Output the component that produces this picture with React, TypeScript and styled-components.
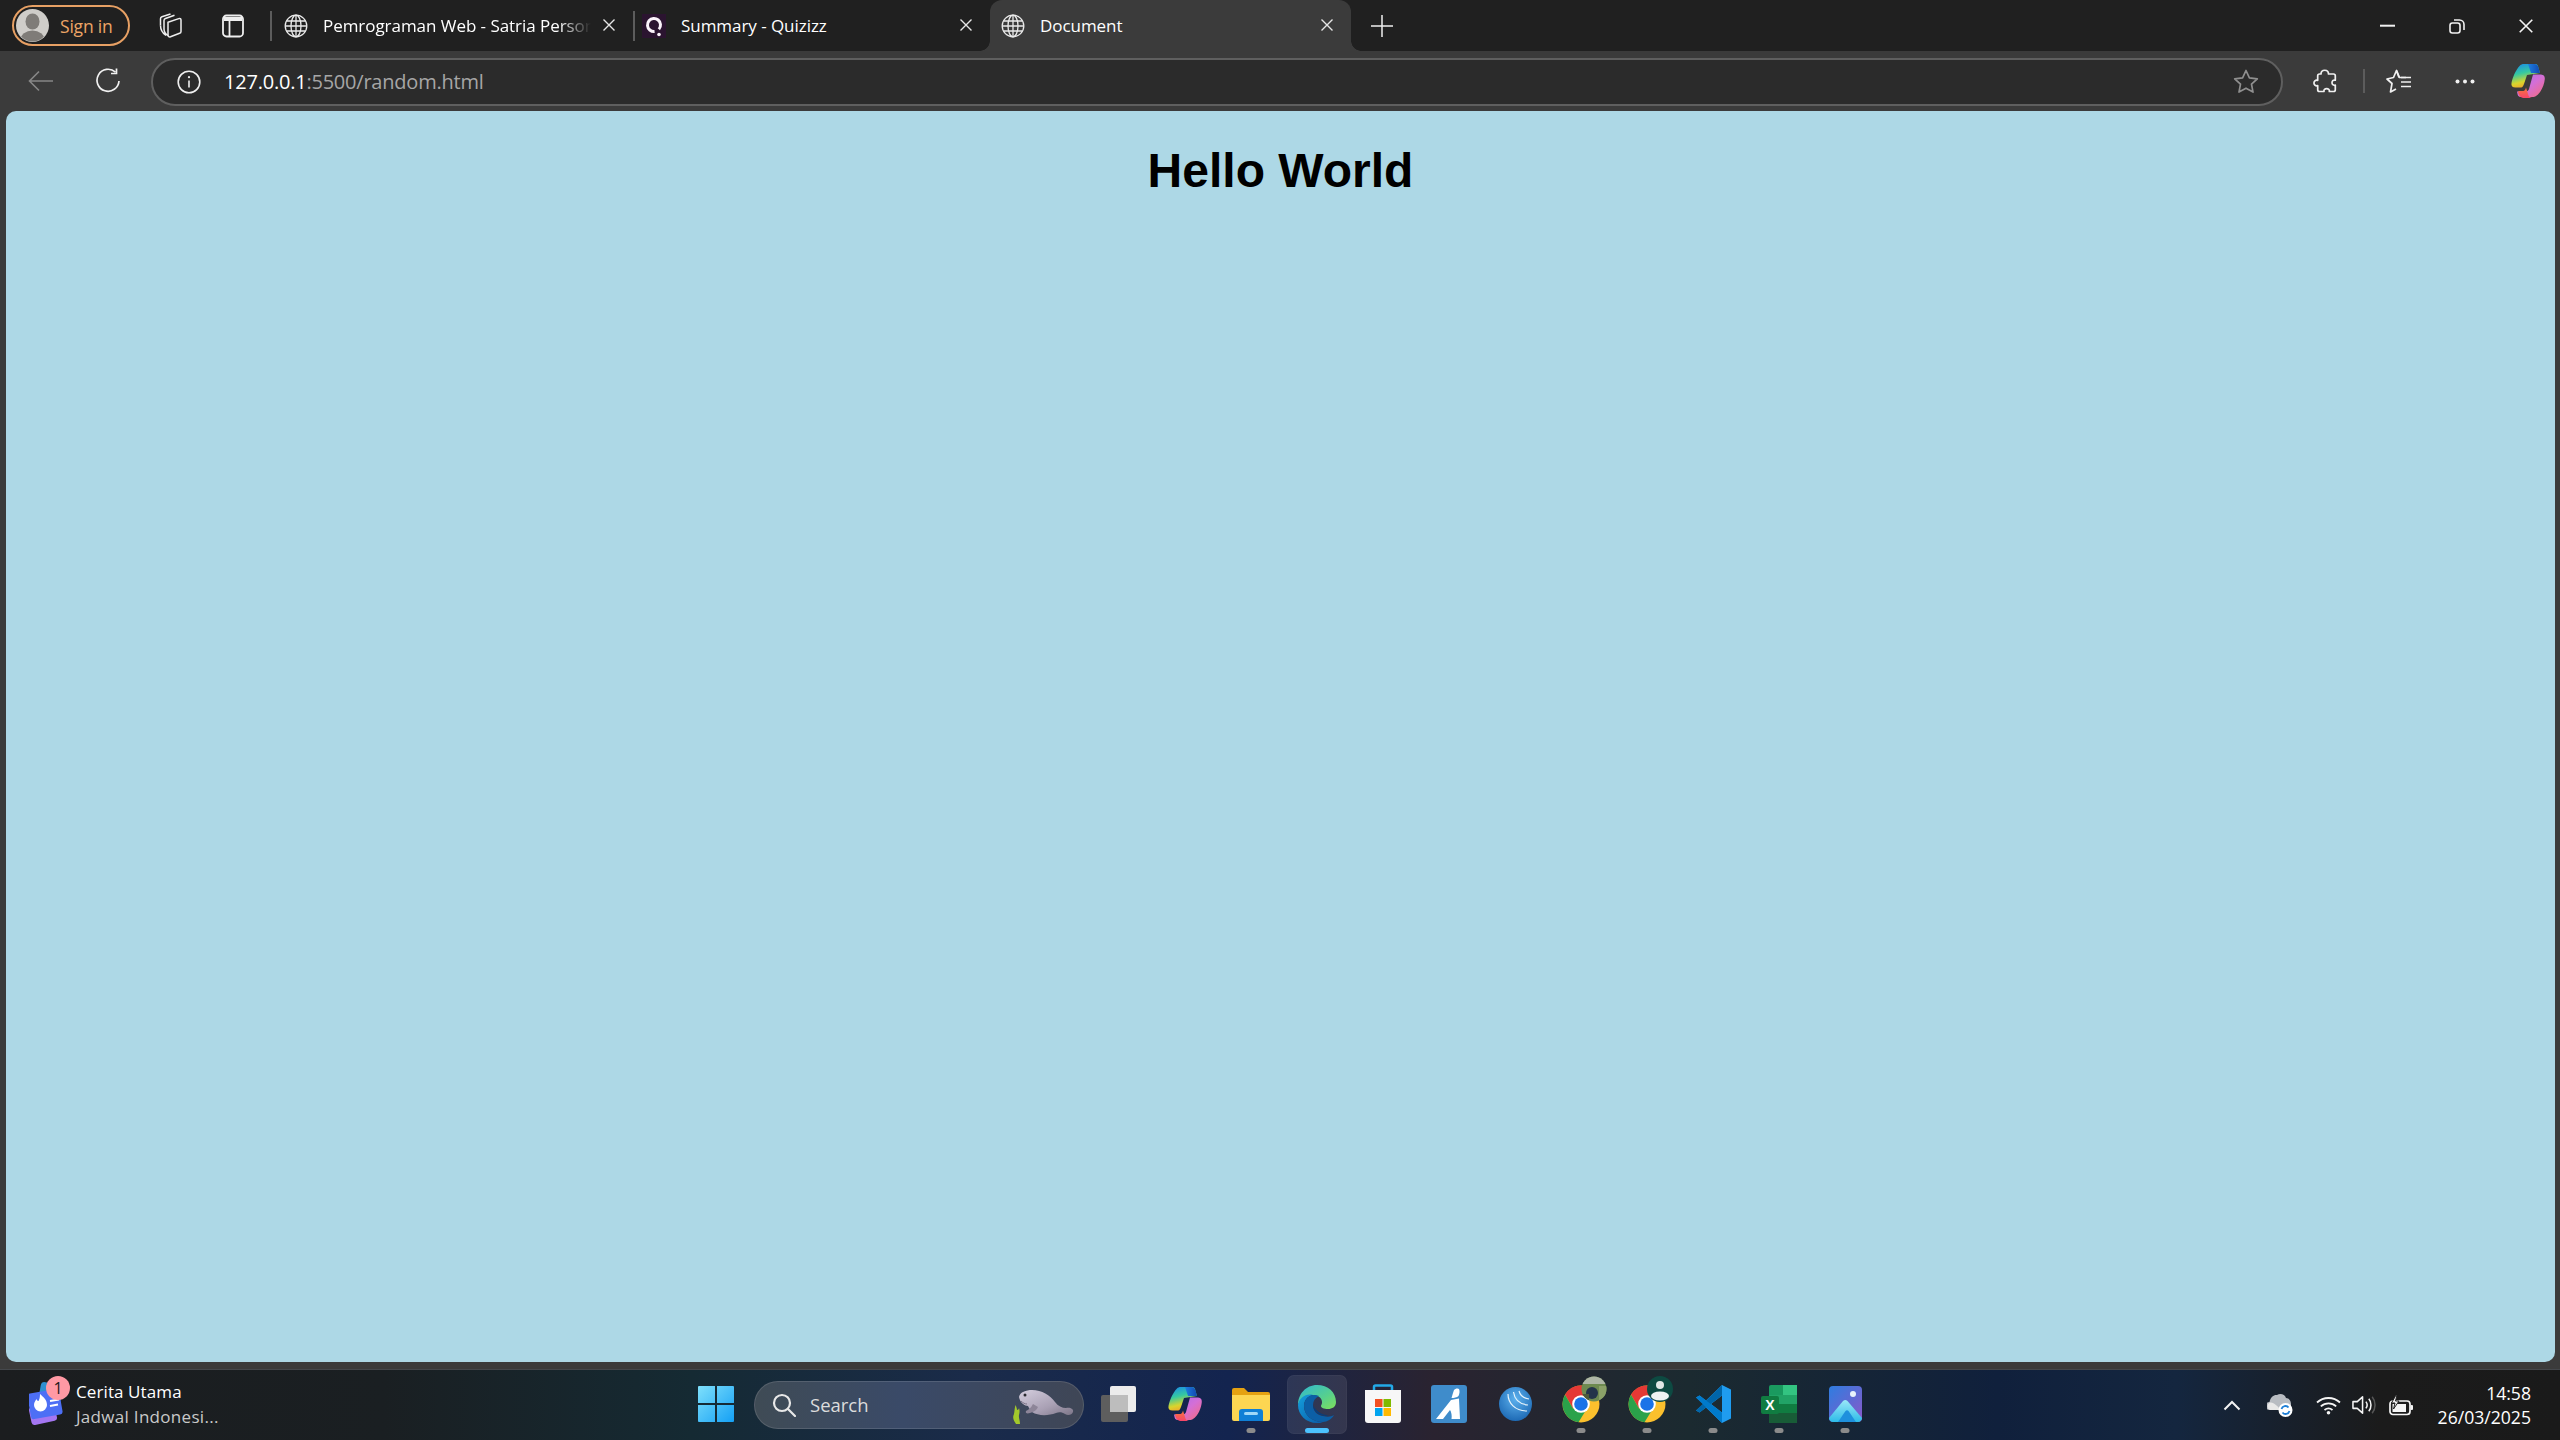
import React from "react";
import styled, { createGlobalStyle } from "styled-components";

const Global = createGlobalStyle`
  html, body { margin: 0; padding: 0; background: #3b3b3b; }
  #root { width: 2560px; height: 1440px; overflow: hidden; }
`;

const UI = `"Open Sans", "Noto Sans", sans-serif`;

const Page = styled.div`
  width: 2560px;
  height: 1440px;
  display: flex;
  flex-direction: column;
  font-family: ${UI};
`;

/* ---------- title bar ---------- */
const TitleBar = styled.div`
  height: 51px;
  flex: none;
  background: #202020;
  display: flex;
  align-items: center;
  padding-left: 12px;
`;
const SignIn = styled.div`
  width: 118px;
  height: 41px;
  box-sizing: border-box;
  border: 2px solid #e7a064;
  border-radius: 21px;
  display: flex;
  align-items: center;
  padding-left: 2px;
  gap: 11px;
  color: #eda566;
  font-size: 17.5px;
  letter-spacing: -0.2px;
`;
const Slot = styled.div<{ $w: number; $ml?: number }>`
  width: ${(p) => p.$w}px;
  margin-left: ${(p) => p.$ml ?? 0}px;
  flex: none;
  display: flex;
  align-items: center;
  justify-content: center;
`;
const TabDivider = styled.div`
  width: 2px;
  height: 30px;
  background: #5c5c5c;
  flex: none;
`;
const Tab = styled.div<{ $w: number; $active?: boolean }>`
  position: relative;
  width: ${(p) => p.$w}px;
  flex: none;
  align-self: stretch;
  display: flex;
  align-items: center;
  box-sizing: border-box;
  background: ${(p) => (p.$active ? "#3b3b3b" : "transparent")};
  border-radius: 12px 12px 0 0;
  color: #fff;
  font-size: 17px;
  letter-spacing: -0.05px;
`;
const TabIcon = styled.div<{ $x: number }>`
  width: 26px;
  flex: none;
  margin-left: ${(p) => p.$x}px;
  display: flex;
  justify-content: center;
`;
const TabTitle = styled.div<{ $w: number; $fade?: boolean }>`
  width: ${(p) => p.$w}px;
  margin-left: 14px;
  flex: none;
  white-space: nowrap;
  overflow: hidden;
  ${(p) =>
    p.$fade
      ? "-webkit-mask-image: linear-gradient(90deg,#000 88%,transparent 100%); mask-image: linear-gradient(90deg,#000 88%,transparent 100%);"
      : ""}
`;
const TabClose = styled.div`
  position: absolute;
  right: 17px;
  top: 18px;
  display: flex;
`;
const Flare = styled.div<{ $side: "left" | "right" }>`
  position: absolute;
  bottom: 0;
  ${(p) => p.$side}: -10px;
  width: 10px;
  height: 10px;
  background: radial-gradient(circle at ${(p) => (p.$side === "left" ? "0 0" : "100% 0")}, #202020 9.5px, #3b3b3b 10px);
`;
const Spacer = styled.div`
  flex: 1;
`;

/* ---------- toolbar ---------- */
const ToolBar = styled.div`
  height: 60px;
  flex: none;
  background: #3b3b3b;
  display: flex;
  align-items: center;
  padding: 0 0 0 9px;
`;
const Address = styled.div`
  width: 2132px;
  height: 48px;
  margin-top: 1px;
  margin-left: 9px;
  flex: none;
  box-sizing: border-box;
  background: #2b2b2b;
  border: 2px solid #5f5f5f;
  border-radius: 24px;
  display: flex;
  align-items: center;
  padding: 0 22px 0 24px;
  font-size: 20px;
  letter-spacing: -0.22px;
`;
const UrlHost = styled.span`
  color: #fff;
  margin-left: 23px;
`;
const UrlRest = styled.span`
  color: #a6a6a6;
`;
const ToolDivider = styled.div`
  width: 2px;
  height: 24px;
  background: #5c5c5c;
  flex: none;
`;

/* ---------- page viewport ---------- */
const Frame = styled.div`
  flex: 1;
  background: #3b3b3b;
  padding: 0 5px 7px 6px;
  display: flex;
`;
const Viewport = styled.main`
  flex: 1;
  background: #add8e6;
  border-radius: 10px;
  text-align: center;
  font-family: "Liberation Sans", Arial, sans-serif;
`;
const Heading = styled.h1`
  margin: 33px 0 0;
  font-size: 48px;
  line-height: 54px;
  font-weight: 700;
  color: #000;
`;

/* ---------- taskbar ---------- */
const TaskBar = styled.footer`
  height: 71px;
  flex: none;
  background: linear-gradient(
    90deg,
    #1b1d1f 0%,
    #1a1f22 15%,
    #152a33 27%,
    #1a2b4a 38%,
    #13244f 48%,
    #2a2330 56%,
    #1b2a30 66%,
    #10203c 78%,
    #14263f 85%,
    #1b1b1b 93%,
    #1a1a1a 100%
  );
  border-top: 1px solid #45484c;
  box-sizing: border-box;
  display: flex;
  align-items: center;
  position: relative;
`;
const Widget = styled.div`
  width: 683px;
  flex: none;
  display: flex;
  align-items: center;
  box-sizing: border-box;
  padding-left: 29px;
  gap: 9px;
`;
const WidgetIcon = styled.div`
  position: relative;
  width: 38px;
  height: 44px;
  flex: none;
  margin-top: -4px;
`;
const Badge = styled.div`
  position: absolute;
  left: 17px;
  top: -5px;
  width: 24px;
  height: 24px;
  border-radius: 50%;
  background: #ff99a4;
  color: #1a1a1a;
  font-size: 16px;
  line-height: 24px;
  text-align: center;
`;
const WidgetText = styled.div`
  display: flex;
  flex-direction: column;
  gap: 4px;
  margin-top: -2px;
  font-size: 17px;
  line-height: 21px;
  letter-spacing: 0.1px;
`;
const WidgetTitle = styled.div`
  color: #fff;
`;
const WidgetSub = styled.div`
  color: #c9c9c9;
  letter-spacing: 0.3px;
`;
const SearchBox = styled.div`
  position: relative;
  width: 330px;
  height: 48px;
  margin: -1px 2px 0 5px;
  box-sizing: border-box;
  flex: none;
  border: 1.5px solid rgba(255, 255, 255, 0.12);
  border-radius: 24px;
  background: linear-gradient(90deg, #3f4b55 0%, #3a4a68 45%, #3f4656 100%);
  display: flex;
  align-items: center;
  padding-left: 17px;
  color: #dcdcdc;
  font-size: 18.5px;
  gap: 14px;
`;
const Manatee = styled.div`
  position: absolute;
  right: 9px;
  top: 7px;
  display: flex;
`;
const TaskSlot = styled.div`
  position: relative;
  width: 66px;
  height: 59px;
  flex: none;
  display: flex;
  align-items: center;
  justify-content: center;
  margin-top: -2px;
  box-sizing: border-box;
`;
const ActiveBack = styled.div`
  position: absolute;
  left: 3px;
  right: 3px;
  top: 0;
  bottom: 0;
  border-radius: 7px;
  background: rgba(255, 255, 255, 0.09);
  border: 1px solid rgba(255, 255, 255, 0.03);
`;
const RunDot = styled.div<{ $active?: boolean }>`
  position: absolute;
  left: 50%;
  bottom: 1px;
  transform: translateX(-50%);
  width: ${(p) => (p.$active ? 24 : 9)}px;
  height: 5px;
  border-radius: 3px;
  background: ${(p) => (p.$active ? "#4cc2ff" : "#8b8b8b")};
`;
const IconWrap = styled.div`
  position: relative;
  display: flex;
`;
const Tray = styled.div`
  margin-left: auto;
  display: flex;
  align-items: center;
`;
const Clock = styled.div`
  width: 98px;
  margin-left: 7px;
  margin-right: 29px;
  text-align: right;
  color: #fff;
  font-size: 17.6px;
  line-height: 24px;
  flex: none;
  white-space: nowrap;
`;

/* ---------- icons ---------- */
const Avatar = () => (
  <svg width="33" height="33" viewBox="0 0 33 33">
    <circle cx="16.5" cy="16.5" r="16.5" fill="#cfcdc9" />
    <clipPath id="av">
      <circle cx="16.5" cy="16.5" r="16" />
    </clipPath>
    <g clipPath="url(#av)" fill="#7f7c78">
      <ellipse cx="16.5" cy="12.5" rx="7" ry="8" />
      <ellipse cx="16.5" cy="31" rx="12" ry="9.5" />
    </g>
  </svg>
);
const Collections = () => (
  <svg width="25" height="25" viewBox="0 0 25 25" fill="none" stroke="#eee" strokeWidth="1.5" strokeLinejoin="round">
    <path d="M11 9.2L21.8 5.600c1.200-.4 2.200.2 2.200 1.500v11.300c0 1-.5 1.600-1.400 1.900L13.500 23.800c-1.400.5-2.500-.3-2.500-1.700z" />
    <path d="M7 16V7.500c0-1 .5-1.700 1.400-2L17.500 2.200" />
    <path d="M3.500 12.500V5.800c0-1 .5-1.700 1.400-2L13.500 1" />
    <path d="M7 16c0 2 1.500 5 4 6.500M3.500 12.500c0 3 2 7.500 5.500 10" />
  </svg>
);
const VerticalTabs = () => (
  <svg width="22" height="24" viewBox="0 0 22 24" fill="none" stroke="#eee" strokeWidth="1.8">
    <rect x="1" y="1.5" width="20" height="21" rx="3.5" />
    <path d="M7.5 7v15" />
    <path d="M2 3h18v4H2z" fill="#eee" stroke="none" />
  </svg>
);
const Globe = () => (
  <svg width="24" height="24" viewBox="0 0 24 24" fill="none" stroke="#eaeaea" strokeWidth="1.3">
    <circle cx="12" cy="12" r="10.8" />
    <ellipse cx="12" cy="12" rx="5" ry="10.8" />
    <path d="M1.2 12h21.6M2.6 7h18.8M2.600 17h18.8M12 1.2v21.6" />
  </svg>
);
const Quizizz = () => (
  <svg width="24" height="24" viewBox="0 0 24 24">
    <rect width="24" height="24" fill="#2b1430" />
    <circle cx="12" cy="11" r="6.500" fill="none" stroke="#fbf4fb" strokeWidth="3" strokeDasharray="35 6" transform="rotate(85 12 11)" />
    <circle cx="17" cy="20.500" r="1.800" fill="#fbf4fb" />
  </svg>
);
const Close = ({ s = 14, c = "#e6e6e6" }: { s?: number; c?: string }) => (
  <svg width={s} height={s} viewBox="0 0 14 14" stroke={c} strokeWidth="1.4" fill="none">
    <path d="M1.5 1.5l11 11M12.5 1.5l-11 11" />
  </svg>
);
const Plus = () => (
  <svg width="22" height="22" viewBox="0 0 22 22" stroke="#eee" strokeWidth="1.5">
    <path d="M11 0v22M0 11h22" />
  </svg>
);
const Minimize = () => (
  <svg width="16" height="4" viewBox="0 0 16 4">
    <rect y="0.7" width="15" height="2" fill="#f0f0f0" />
  </svg>
);
const Restore = () => (
  <svg width="16" height="16" viewBox="0 0 16 16" fill="none" stroke="#f0f0f0" strokeWidth="1.6">
    <rect x="1" y="5" width="10" height="10" rx="2.4" />
    <path d="M5 2h5.5A4.5 4.5 0 0 1 15 6.5V12" />
  </svg>
);
const Back = () => (
  <svg width="26" height="22" viewBox="0 0 26 22" fill="none" stroke="#878787" strokeWidth="1.6">
    <path d="M25 11H2M11 1.5L1.5 11l9.5 9.5" />
  </svg>
);
const Refresh = () => (
  <svg width="26" height="26" viewBox="0 0 26 26" fill="none" stroke="#f0f0f0" strokeWidth="1.7">
    <path d="M20.5 4.2A11 11 0 1 0 24 13" />
    <path d="M21.5 0.5v5h-5.5" />
  </svg>
);
const Info = () => (
  <svg width="24" height="24" viewBox="0 0 24 24" fill="none" stroke="#f0f0f0" strokeWidth="1.6">
    <circle cx="12" cy="12" r="10.8" />
    <path d="M12 10.5v7" />
    <circle cx="12" cy="7.2" r="1.1" fill="#f0f0f0" stroke="none" />
  </svg>
);
const Star = () => (
  <svg width="26" height="25" viewBox="0 0 26 25" fill="none" stroke="#8f8f8f" strokeWidth="1.7" strokeLinejoin="round">
    <path d="M13 1.500l3.400 7.300 7.900 1-5.800 5.400 1.500 7.900L13 19.200l-7 3.900 1.500-7.900-5.800-5.400 7.900-1z" />
  </svg>
);
const Extensions = () => (
  <svg width="24" height="25" viewBox="0 0 24 25" fill="none" stroke="#f0f0f0" strokeWidth="1.7" strokeLinejoin="round">
    <path d="M8 5c0-5 7.500-5 7.500 0h5c1 0 1.800.8 1.800 1.800v4.400c-4.400-1-4.400 6 0 5v4.500c0 1-.8 1.800-1.800 1.800h-4.200c1-3.800-6.300-3.800-5.300 0H6.500c-1 0-1.800-.8-1.800-1.800v-4c-5 1-5-6.400 0-5.400V6.800C4.700 5.800 5.500 5 6.500 5z" />
  </svg>
);
const Favorites = () => (
  <svg width="26" height="25" viewBox="0 0 26 25" fill="none" stroke="#f0f0f0" strokeWidth="1.7" strokeLinejoin="round">
    <path d="M13 8.500L10.500 1.500 7.500 8.500 1 10l5 4.500L4.500 23 10 20" />
    <path d="M10.500 1.500l3 7H20" />
    <path d="M15 13h10M15 17.500h10M15 8.500h10" strokeWidth="1.5" />
  </svg>
);
const Dots = () => (
  <svg width="20" height="5" viewBox="0 0 20 5" fill="#f0f0f0">
    <circle cx="2.500" cy="2.500" r="2" />
    <circle cx="10" cy="2.500" r="2" />
    <circle cx="17.500" cy="2.500" r="2" />
  </svg>
);
const Copilot = ({ size = 34, id }: { size?: number; id: string }) => (
  <svg width={size} height={size} viewBox="0 0 34 34">
    <defs>
      <linearGradient id={`${id}a`} x1="0.2" y1="0" x2="0.5" y2="1">
        <stop offset="0" stopColor="#1b8fe6" />
        <stop offset="0.4" stopColor="#36c9a0" />
        <stop offset="0.75" stopColor="#d8d52d" />
        <stop offset="1" stopColor="#f2a32a" />
      </linearGradient>
      <linearGradient id={`${id}b`} x1="0" y1="0" x2="1" y2="1">
        <stop offset="0" stopColor="#a86bf0" />
        <stop offset="0.5" stopColor="#d46fd6" />
        <stop offset="1" stopColor="#f76a7a" />
      </linearGradient>
      <linearGradient id={`${id}c`} x1="0" y1="0" x2="0" y2="1">
        <stop offset="0" stopColor="#f8783a" />
        <stop offset="1" stopColor="#f6456a" />
      </linearGradient>
      <linearGradient id={`${id}d`} x1="0" y1="0" x2="1" y2="0">
        <stop offset="0" stopColor="#1d7fe0" />
        <stop offset="1" stopColor="#1248b0" />
      </linearGradient>
    </defs>
    <path d="M9 1.500C10 .5 11 0 13 0h11c2.500 0 3 1.500 3.500 4L29 9l-13 2-3 9c-1 3-2 3.500-4 3.500H4.500C1.500 23.500 0 22 .5 19c1-5 4-13 8.500-17.500z" fill={`url(#${id}a)`} />
    <path d="M17 0h6c2.500 0 3.800 1 4.600 4l1.400 5h-9z" fill={`url(#${id}d)`} />
    <path d="M22 10.500h7c3 0 5 1 4.800 4.500-.4 6-4 14-8.800 17-1 .8-2 1-3.500 1H10c-2.500 0-3.200-1.500-3.600-3.500l-.4-2h8.500c2 0 3-1 3.500-2.500z" fill={`url(#${id}b)`} />
    <path d="M13.500 34h7.500c-2.500-.3-3.500-2-4-4l-2-6.500c-.5 2-1 3-2.500 3.500H8l-1 .5c.5 4 2.500 6.500 6.500 6.500z" fill={`url(#${id}c)`} />
  </svg>
);
const Fire = () => (
  <svg width="38" height="44" viewBox="0 0 38 44">
    <rect x="10" y="2" width="22" height="26" rx="4" fill="#2e8fd0" transform="rotate(10 20 15)" />
    <rect x="1" y="24" width="26" height="18" rx="3" fill="#a476f2" transform="rotate(-12 14 33)" />
    <rect x="0" y="10" width="32" height="26" rx="3" fill="#4d6ff5" transform="rotate(-10 16 23)" />
    <path d="M11 13c3 3 7 5 7 11a6.500 6.500 0 0 1-13 0c0-3 1.500-4 2.500-6 .5 1.500 1.200 2 2 2 1-2 1.500-4 1.500-7z" fill="#fff" />
    <path d="M21 20l9-1.500M21 25l8-1.400" stroke="#fff" strokeWidth="2" />
  </svg>
);
const Search = () => (
  <svg width="24" height="24" viewBox="0 0 24 24" fill="none" stroke="#e8e8e8" strokeWidth="2.200">
    <circle cx="10" cy="10" r="8" />
    <path d="M16 16l7 7" strokeLinecap="round" />
  </svg>
);
const ManateeArt = () => (
  <svg width="62" height="36" viewBox="0 0 62 36">
    <defs>
      <linearGradient id="man" x1="0" y1="0" x2="1" y2="1">
        <stop offset="0" stopColor="#d4cede" />
        <stop offset="0.6" stopColor="#a9a0b4" />
        <stop offset="1" stopColor="#7d7688" />
      </linearGradient>
    </defs>
    <path d="M4 35C2 32 0 29 2 25c.5-2 .5-6 1.500-9 1 2 1.500 4 1.500 5 1 0 2-1 2-2 1 3 .5 5 0 7-.5 3 1 5 1 9z" fill="#a3c92b" />
    <path d="M7 8C8 3 14 1 20 1c10 0 18 5 23 12 3 4 7 6 11 6 4-1 8 1 7 4-1 3-5 4-8 2-3-2-6-2-9-1-8 3-18 3-24-1-2-2-3-4-4-6-3 0-8-3-9-9z" fill="url(#man)" />
    <path d="M21 15c-2 4-5 6-7 7-1 2 1 3 4 2 4-1 7-3 8-6z" fill="#8d8598" />
    <path d="M9 12c2 2 4 3 6 3" fill="none" stroke="#7a7286" strokeWidth="1" />
    <circle cx="13" cy="6" r="1.500" fill="#2a2a30" />
  </svg>
);
const TaskView = () => (
  <svg width="36" height="38" viewBox="0 0 36 38">
    <rect x="0" y="10" width="27" height="27" rx="2" fill="#5e5e5e" />
    <rect x="9" y="1" width="26" height="26" rx="2" fill="#ececec" />
    <rect x="9" y="10" width="18" height="17" fill="#bdbdbd" />
  </svg>
);
const Windows = () => (
  <svg width="36" height="36" viewBox="0 0 36 36">
    <defs>
      <linearGradient id="win" x1="0" y1="0" x2="1" y2="1">
        <stop offset="0" stopColor="#7fe0fb" />
        <stop offset="1" stopColor="#14a0f5" />
      </linearGradient>
    </defs>
    <path d="M1 0h16v17H0V1a1 1 0 0 1 1-1zM19 0h16a1 1 0 0 1 1 1v16H19zM0 19h17v17H1a1 1 0 0 1-1-1zM19 19h17v16a1 1 0 0 1-1 1H19z" fill="url(#win)" />
  </svg>
);
const Explorer = () => (
  <svg width="38" height="34" viewBox="0 0 38 34">
    <path d="M0 3a2 2 0 0 1 2-2h10l4 4h20a2 2 0 0 1 2 2v6H0z" fill="#e5a111" />
    <path d="M0 8h38v24a2 2 0 0 1-2 2H2a2 2 0 0 1-2-2z" fill="#fdd652" />
    <path d="M7 34V25a3 3 0 0 1 3-3h18a3 3 0 0 1 3 3v9z" fill="#0f7fd6" />
    <rect x="12" y="25" width="14" height="3" rx="1.500" fill="#9fd8f8" />
  </svg>
);
const Edge = () => (
  <svg width="38" height="38" viewBox="0 0 38 38">
    <defs>
      <linearGradient id="eg1" x1="0" y1="0" x2="1" y2="1">
        <stop offset="0" stopColor="#2fb7d4" />
        <stop offset="0.6" stopColor="#57d08d" />
        <stop offset="1" stopColor="#7fe05a" />
      </linearGradient>
      <linearGradient id="eg2" x1="0" y1="0" x2="1" y2="1">
        <stop offset="0" stopColor="#14a0dc" />
        <stop offset="1" stopColor="#0a5aa8" />
      </linearGradient>
    </defs>
    <path d="M19 0c11 0 19 7 19 17 0 5-4 7-8 7-4 0-7-1-7-3 0-1 1-1 1-4 0-4-4-7-9-7C8 10 2 14 0 20 0 9 8 0 19 0z" fill="url(#eg1)" />
    <path d="M0 20c1-7 8-12 15-10-6 1-9 6-9 11 0 9 8 16 19 16-2 1-4 1-6 1C8 38 0 30 0 20z" fill="url(#eg2)" />
    <path d="M15 10c-6 1-9 6-9 11 0 9 8 16 19 16 4 0 9-3 11-7-3 2-7 2-11 1-6-1-10-5-10-11 0-4 2-7 6-9-2-1-4-1-6-1z" fill="#0c5fa6" />
    <path d="M15 20c0 7 7 11 13 11 3 0 6-1 8-2-3 2-5 2-8 1-6-1-11-5-13-10z" fill="#0a3d7a" />
  </svg>
);
const Store = () => (
  <svg width="36" height="40" viewBox="0 0 36 40">
    <path d="M9 7V3a1.500 1.500 0 0 1 1.500-1.500h15A1.500 1.500 0 0 1 27 3v4" fill="none" stroke="#23a9e8" strokeWidth="2.500" />
    <path d="M0 6h36v30a3 3 0 0 1-3 3H3a3 3 0 0 1-3-3z" fill="#f7f7f7" />
    <rect x="10" y="15" width="7.500" height="8" fill="#f25022" />
    <rect x="18.500" y="15" width="7.500" height="8" fill="#7fba00" />
    <rect x="10" y="24" width="7.500" height="8" fill="#00a4ef" />
    <rect x="18.500" y="24" width="7.500" height="8" fill="#ffb900" />
  </svg>
);
const ArcApp = () => (
  <svg width="36" height="38" viewBox="0 0 36 38">
    <rect width="36" height="38" rx="3" fill="#3f8ccb" />
    <path d="M23 5c1-1.500 4-2 5-1 1 2 .5 5-.5 7-1.500 1.500-4.500 2-7 2 1-3 1.500-5.500 2.500-8z" fill="#fff" />
    <path d="M20 15l8-1.500 1 20.500h-8.500c.5-3 0-7-1.500-9L12 34H5z" fill="#fff" />
  </svg>
);
const Winbox = () => (
  <svg width="33" height="34" viewBox="0 0 33 34">
    <defs>
      <radialGradient id="wb" cx="0.5" cy="0.35" r="0.8">
        <stop offset="0" stopColor="#5db1ee" />
        <stop offset="1" stopColor="#0f5aa8" />
      </radialGradient>
    </defs>
    <ellipse cx="16.500" cy="17" rx="16.500" ry="17" fill="url(#wb)" />
    <path d="M9 7c0 9 7 17 19 17M14.500 5c1 7 5 12 14.500 13M20 4c1 4 3 7 10 8" fill="none" stroke="#e6f3fb" strokeWidth="1.200" />
  </svg>
);
const Chrome = () => (
  <svg width="38" height="38" viewBox="0 0 38 38">
    <circle cx="19" cy="19" r="18.500" fill="#fbc02d" />
    <path d="M19 .5A18.500 18.500 0 0 0 3 9.700l8 13.800L19 11h16A18.500 18.500 0 0 0 19 .5z" fill="#e53935" />
    <path d="M3 9.700A18.500 18.500 0 0 0 16.500 37.300L25 23.500H11z" fill="#2aa24a" />
    <circle cx="19" cy="19" r="8.800" fill="#fff" />
    <circle cx="19" cy="19" r="6.800" fill="#1a73e8" />
  </svg>
);
const Overlay = styled.div`
  position: absolute;
  left: 19px;
  top: -9px;
  display: flex;
`;
const PhotoBadge = () => (
  <svg width="26" height="26" viewBox="0 0 26 26">
    <clipPath id="pb">
      <circle cx="13" cy="13" r="12.500" />
    </clipPath>
    <g clipPath="url(#pb)">
      <rect width="26" height="26" fill="#6e8a50" />
      <rect width="26" height="8" fill="#aeb6a6" />
      <circle cx="11" cy="17" r="6" fill="#24344a" />
      <rect x="0" y="18" width="8" height="8" fill="#4d5a38" />
      <rect x="18" y="10" width="8" height="16" fill="#8ba168" />
    </g>
  </svg>
);
const PersonBadge = () => (
  <svg width="26" height="26" viewBox="0 0 26 26">
    <circle cx="13" cy="13" r="13" fill="#0d4a42" />
    <circle cx="13" cy="9" r="4" fill="#dfe8e6" />
    <ellipse cx="13" cy="20" rx="9" ry="4.500" fill="#eef3f2" />
  </svg>
);
const VSCode = () => (
  <svg width="36" height="38" viewBox="0 0 36 38">
    <path d="M27 0l9 4.500v29L27 38 11 22.500l-6.500 5L1 25.500 8.500 19 1 12.500l3.500-2 6.500 5z" fill="#1f9cf0" />
    <path d="M27 10.500v17L16 19z" fill="#1c2b33" />
    <path d="M1 25.500L27 0v10.500L4.500 27.500z" fill="#0065a9" />
    <path d="M1 12.500L27 38V27.500L4.500 10.500z" fill="#007acc" />
  </svg>
);
const ExcelBox = styled.div`
  position: relative;
  width: 36px;
  height: 38px;
  display: flex;
`;
const ExcelLetter = styled.div`
  position: absolute;
  left: 0;
  top: 11px;
  width: 18px;
  height: 18px;
  background: #107c41;
  border-radius: 2px;
  color: #fff;
  font-family: "Liberation Sans", sans-serif;
  font-weight: 700;
  font-size: 14px;
  line-height: 18px;
  text-align: center;
`;
const Excel = () => (
  <ExcelBox>
    <svg width="36" height="38" viewBox="0 0 36 38">
      <rect x="8" y="0" width="28" height="38" rx="2" fill="#1a9a5f" />
      <rect x="22" y="0" width="14" height="10" fill="#33c481" />
      <rect x="22" y="10" width="14" height="9" fill="#21a366" />
      <rect x="8" y="10" width="14" height="9" fill="#21a366" />
      <rect x="8" y="19" width="28" height="9" fill="#107c41" />
      <rect x="8" y="28" width="28" height="10" fill="#185c37" />
    </svg>
    <ExcelLetter>X</ExcelLetter>
  </ExcelBox>
);
const Photos = () => (
  <svg width="33" height="36" viewBox="0 0 33 36">
    <defs>
      <linearGradient id="ph" x1="0" y1="0" x2="1" y2="1">
        <stop offset="0" stopColor="#2e7de0" />
        <stop offset="1" stopColor="#8a58c8" />
      </linearGradient>
      <linearGradient id="ph2" x1="0" y1="0" x2="0" y2="1">
        <stop offset="0" stopColor="#9be8f8" />
        <stop offset="1" stopColor="#2dbbe8" />
      </linearGradient>
    </defs>
    <rect width="33" height="36" rx="4" fill="url(#ph)" />
    <circle cx="24" cy="8" r="3" fill="#e8f2fb" />
    <path d="M0 32l14-17c1.500-1.500 3-1.500 4.500 0L33 32c0 2-2 4-4 4H4c-2 0-4-2-4-4z" fill="url(#ph2)" />
    <path d="M9 36l7.500-11c1-1 2-1 3 0L27 36z" fill="#1e90dd" />
  </svg>
);
const Chevron = () => (
  <svg width="18" height="11" viewBox="0 0 18 11" fill="none" stroke="#f2f2f2" strokeWidth="2">
    <path d="M1.500 9.500L9 2l7.500 7.500" />
  </svg>
);
const OneDrive = () => (
  <svg width="26" height="24" viewBox="0 0 26 24">
    <path d="M3 17a4 4 0 0 1-.5-8C3.500 4 7 1.500 10 2c3-2 8-1 9 3 3 0 5 3 5 6v6z" fill="#b8bcc2" />
    <path d="M3 17a4 4 0 0 1-1-7c4-2 8 3 12 7z" fill="#e8e8e8" />
    <circle cx="18.500" cy="17" r="7" fill="#fff" />
    <path d="M14.500 16a4 4 0 0 1 7-1.500M22.500 18a4 4 0 0 1-7 1.500" fill="none" stroke="#1f7fd6" strokeWidth="1.800" />
  </svg>
);
const Wifi = () => (
  <svg width="25" height="19" viewBox="0 0 25 19" fill="none" stroke="#f4f4f4" strokeWidth="1.800">
    <path d="M1 6.500C7.500 .5 17.500 .5 24 6.500M4.800 10.300c4.500-4 11-4 15.400 0M8.500 14c2.400-2 5.600-2 8 0" />
    <circle cx="12.500" cy="16.800" r="1.800" fill="#f4f4f4" stroke="none" />
  </svg>
);
const Volume = () => (
  <svg width="25" height="20" viewBox="0 0 25 20" fill="none" stroke="#f4f4f4" strokeWidth="1.600" strokeLinejoin="round">
    <path d="M1 6.500h4.500L11 1.500v17l-5.500-5H1z" />
    <path d="M14.500 6.500c1.500 2 1.500 5 0 7M17.500 3.500c3 3.500 3 9.500 0 13" />
    <path d="M21 1.500c4 5 4 12 0 17" stroke="#555" />
  </svg>
);
const Battery = () => (
  <svg width="25" height="21" viewBox="0 0 25 21" fill="none">
    <rect x="1" y="6" width="20" height="13.500" rx="3" stroke="#f4f4f4" strokeWidth="1.700" />
    <rect x="21.500" y="10" width="2.500" height="5" rx="1" fill="#f4f4f4" />
    <path d="M3.500 17V9h3L12 9h5v8z" fill="#f4f4f4" />
    <path d="M7 0L2.500 8h3.500L4.500 14 10 6H6.500L8 0z" fill="#f4f4f4" stroke="#202020" strokeWidth="1" />
  </svg>
);

type Task = { key: string; node: React.ReactNode; dot?: boolean; active?: boolean };

const tasks: Task[] = [
  { key: "view", node: <TaskView /> },
  { key: "copilot", node: <Copilot size={34} id="cpb" /> },
  { key: "files", node: <Explorer />, dot: true },
  { key: "edge", node: <Edge />, dot: true, active: true },
  { key: "store", node: <Store /> },
  { key: "arc", node: <ArcApp /> },
  { key: "winbox", node: <Winbox /> },
  {
    key: "chrome1",
    node: (
      <IconWrap>
        <Chrome />
        <Overlay>
          <PhotoBadge />
        </Overlay>
      </IconWrap>
    ),
    dot: true,
  },
  {
    key: "chrome2",
    node: (
      <IconWrap>
        <Chrome />
        <Overlay>
          <PersonBadge />
        </Overlay>
      </IconWrap>
    ),
    dot: true,
  },
  { key: "vscode", node: <VSCode />, dot: true },
  { key: "excel", node: <Excel />, dot: true },
  { key: "photos", node: <Photos />, dot: true },
];

export default function App() {
  return (
    <Page>
      <Global />
      <TitleBar>
        <SignIn>
          <Avatar />
          Sign in
        </SignIn>
        <Slot $w={63} $ml={8}>
          <Collections />
        </Slot>
        <Slot $w={63}>
          <VerticalTabs />
        </Slot>
        <Slot $w={14}>
          <TabDivider />
        </Slot>
        <Tab $w={355}>
          <TabIcon $x={5}>
            <Globe />
          </TabIcon>
          <TabTitle $w={268} $fade>
            Pemrograman Web - Satria Personal
          </TabTitle>
          <TabClose>
            <Close />
          </TabClose>
        </Tab>
        <TabDivider />
        <Tab $w={355}>
          <TabIcon $x={6}>
            <Quizizz />
          </TabIcon>
          <TabTitle $w={260}>Summary - Quizizz</TabTitle>
          <TabClose>
            <Close />
          </TabClose>
        </Tab>
        <Tab $w={361} $active>
          <Flare $side="left" />
          <TabIcon $x={10}>
            <Globe />
          </TabIcon>
          <TabTitle $w={260}>Document</TabTitle>
          <TabClose>
            <Close />
          </TabClose>
          <Flare $side="right" />
        </Tab>
        <Slot $w={62}>
          <Plus />
        </Slot>
        <Spacer />
        <Slot $w={68}>
          <Minimize />
        </Slot>
        <Slot $w={69}>
          <Restore />
        </Slot>
        <Slot $w={69}>
          <Close s={16} c="#f4f4f4" />
        </Slot>
      </TitleBar>
      <ToolBar>
        <Slot $w={64}>
          <Back />
        </Slot>
        <Slot $w={69}>
          <Refresh />
        </Slot>
        <Address>
          <Info />
          <UrlHost>127.0.0.1</UrlHost>
          <UrlRest>:5500/random.html</UrlRest>
          <Spacer />
          <Star />
        </Address>
        <Slot $w={76} $ml={4}>
          <Extensions />
        </Slot>
        <ToolDivider />
        <Slot $w={68}>
          <Favorites />
        </Slot>
        <Slot $w={64}>
          <Dots />
        </Slot>
        <Slot $w={62}>
          <Copilot id="cpa" />
        </Slot>
      </ToolBar>
      <Frame>
        <Viewport>
          <Heading>Hello World</Heading>
        </Viewport>
      </Frame>
      <TaskBar>
        <Widget>
          <WidgetIcon>
            <Fire />
            <Badge>1</Badge>
          </WidgetIcon>
          <WidgetText>
            <WidgetTitle>Cerita Utama</WidgetTitle>
            <WidgetSub>Jadwal Indonesi...</WidgetSub>
          </WidgetText>
        </Widget>
        <TaskSlot>
          <Windows />
        </TaskSlot>
        <SearchBox>
          <Search />
          Search
          <Manatee>
            <ManateeArt />
          </Manatee>
        </SearchBox>
        {tasks.map((t) => (
          <TaskSlot key={t.key}>
            {t.active && <ActiveBack />}
            <IconWrap>{t.node}</IconWrap>
            {t.dot && <RunDot $active={t.active} />}
          </TaskSlot>
        ))}
        <Tray>
          <Slot $w={48}>
            <Chevron />
          </Slot>
          <Slot $w={48}>
            <OneDrive />
          </Slot>
          <Slot $w={48}>
            <Wifi />
          </Slot>
          <Slot $w={24}>
            <Volume />
          </Slot>
          <Slot $w={50}>
            <Battery />
          </Slot>
          <Clock>
            14:58
            <br />
            26/03/2025
          </Clock>
        </Tray>
      </TaskBar>
    </Page>
  );
}
